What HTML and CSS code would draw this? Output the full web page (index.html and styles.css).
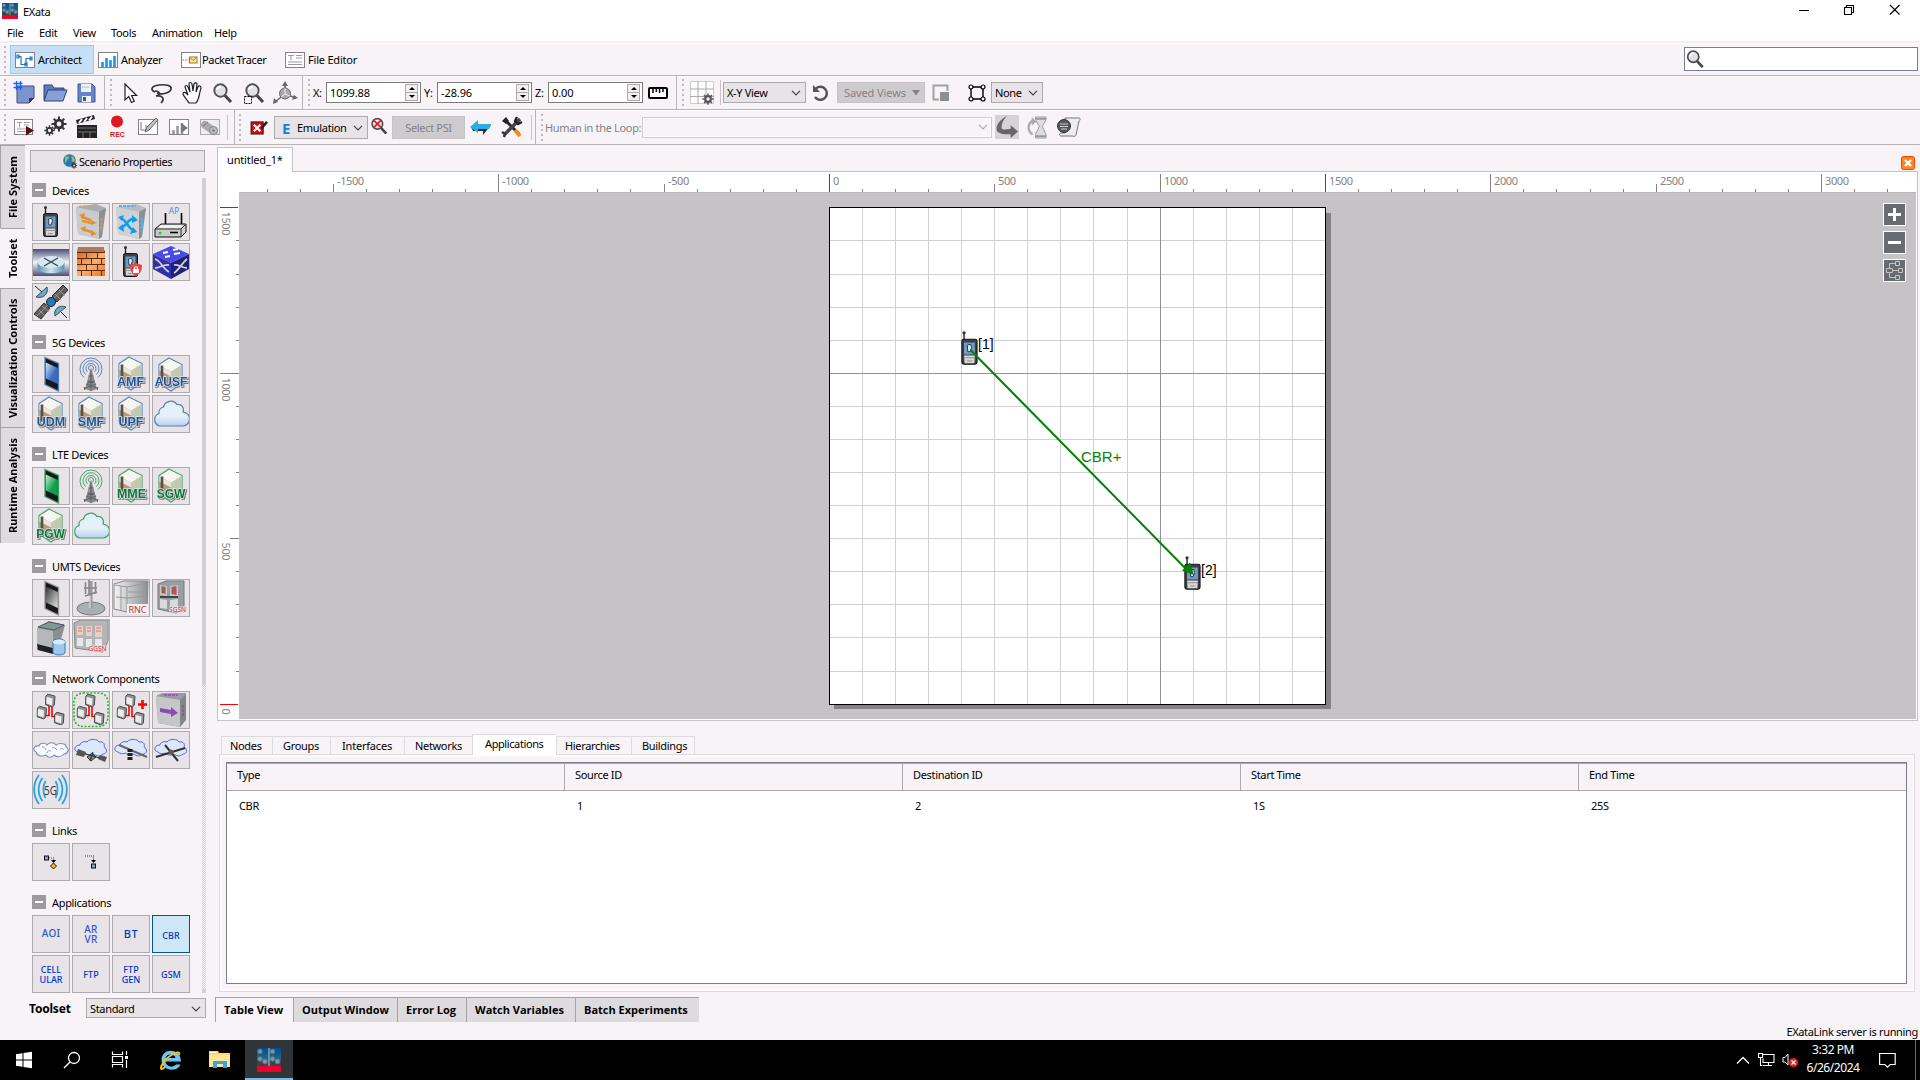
FILE: index.html
```html
<!DOCTYPE html>
<html lang="en">
<head>
<meta charset="utf-8">
<title>EXata</title>
<link rel="stylesheet" href="styles.css">
</head>
<body>
<svg class="defs" aria-hidden="true">
  <defs>
    <linearGradient id="gBlue" x1="0" y1="0" x2="1" y2="1"><stop offset="0" stop-color="#dce8f8"/><stop offset=".6" stop-color="#3a6cc0"/></linearGradient>
    <linearGradient id="gGreen" x1="0" y1="0" x2="1" y2="1"><stop offset="0" stop-color="#cdeed8"/><stop offset=".6" stop-color="#12a04c"/></linearGradient>
    <linearGradient id="gGray" x1="0" y1="0" x2="1" y2="1"><stop offset="0" stop-color="#333"/><stop offset="1" stop-color="#e4e4e4"/></linearGradient>
    <linearGradient id="gRouter" x1="0" y1="0" x2="0" y2="1"><stop offset="0" stop-color="#4a4f78"/><stop offset=".5" stop-color="#f4f4f8"/><stop offset="1" stop-color="#4a4f78"/></linearGradient>
    <linearGradient id="gDisc" x1="0" y1="0" x2="1" y2="0"><stop offset="0" stop-color="#5f93ae"/><stop offset=".5" stop-color="#cfe4ee"/><stop offset="1" stop-color="#5f93ae"/></linearGradient>
    <linearGradient id="gCloud" x1="0" y1="0" x2="0" y2="1"><stop offset=".6" stop-color="#e6f0f8"/><stop offset="1" stop-color="#b8d0f0"/></linearGradient>
    <linearGradient id="gMetal" x1="0" y1="0" x2="1" y2="0"><stop offset="0" stop-color="#f4f4f4"/><stop offset="1" stop-color="#8c9094"/></linearGradient>
    <linearGradient id="gSea" x1="0" y1="0" x2="0" y2="1"><stop offset="0" stop-color="#00508e"/><stop offset="1" stop-color="#29668a"/></linearGradient>
    <linearGradient id="gBrick" x1="0" y1="0" x2="1" y2="1"><stop offset="0" stop-color="#d86820"/><stop offset=".5" stop-color="#ffb070"/><stop offset="1" stop-color="#e87820"/></linearGradient>
    <symbol id="exata" viewBox="0 0 24 24">
      <rect width="24" height="12" fill="url(#gSea)"/><rect y="12" width="24" height="6" fill="#39434b"/><rect y="18" width="24" height="6" fill="#f0002d"/>
      <path d="M12 0v18" stroke="#7ea0b4" stroke-width="1.6"/>
      <g fill="#7d98a8" stroke="#5b7a8c"><circle cx="3" cy="3.5" r="2.2"/><circle cx="15.500" cy="3.500" r="2.200"/><circle cx="3" cy="11" r="2.200"/><circle cx="8" cy="13.500" r="2.400"/><circle cx="15.500" cy="11" r="2.200"/><circle cx="20.500" cy="13.500" r="2.400"/></g>
    </symbol>
    <symbol id="handset" viewBox="0 0 36 36">
      <path d="M12.500 3v9" stroke="#222" stroke-width="1.300"/><circle cx="12.500" cy="3.500" r="1.500" fill="#333"/>
      <rect x="10.500" y="9.500" width="14" height="23" rx="1.800" fill="#3b4045" stroke="#15171a"/>
      <rect x="12.500" y="12.500" width="10" height="11" fill="#6f9cc8"/><path d="M15.500 15l3-1 1 3-1.500 4-2 0z" fill="#e8f0f6" stroke="#20303c" stroke-width=".9"/>
      <path d="M12.500 24.500h10l-.5 7h-9z" fill="#d8d8d8"/><path d="M12.500 26.500h10M15 29.500h5" stroke="#888" stroke-width=".8"/>
    </symbol>
    <symbol id="smart" viewBox="0 0 36 36">
      <path d="M12 1.500l13.500 6v27.500l-13.500-6.500z" fill="#16181c" stroke="var(--line)" stroke-width="1.300"/>
      <path d="M12.800 6.500l12 5.500v16l-12-5.500z"/>
    </symbol>
    <symbol id="tower" viewBox="0 0 36 36">
      <g fill="none" stroke="var(--line)" stroke-width=".95"><circle cx="18" cy="12" r="2.500"/><path d="M14.500 16a5 5 0 1 1 7 0M12.500 18.500a8 8 0 1 1 11 0M11 21.500a11 11 0 1 1 14 0"/></g>
      <path d="M18 11.500l6 21.500-6 2-6-2z" fill="#8a8d90"/><path d="M18 15v20M15.500 20h5M14.500 25l7 2M21.500 25l-7 2M12 32l11-4M24 32l-11-4" stroke="#55585b" stroke-width=".8"/><path d="M11 31l1 3M25 31l-1 3" stroke="#555"/>
    </symbol>
    <symbol id="server" viewBox="0 0 36 36">
      <path d="M16 1l13 6.500v19l-11 7.500-12-8v-18.500z" fill="#f7f6f0" stroke="var(--line)" stroke-width="1.100"/>
      <path d="M6.500 8.500l11.500 6v17l-11.500-7z" fill="#b59a76"/><path d="M6.500 8.500l11.500 6v5l-11.500-6z" fill="#e8e4de"/>
      <path d="M18 14.500l10.500-6.500v18l-10.500 6.500z" fill="#c3c9b1"/><path d="M9 8.500v17" stroke="#57504a" stroke-width="2.600"/>
    </symbol>
    <symbol id="cloud" viewBox="0 0 36 36">
      <path d="M7 30a6.500 6.500 0 0 1-1-12.500 6 6 0 0 1 4.500-6.500 7.500 7.500 0 0 1 13.500-2.500 5.500 5.500 0 0 1 6 7.500 7 7 0 0 1-1 14z" fill="url(#gCloud)" stroke="var(--line)" stroke-width="1.200"/>
    </symbol>
    <symbol id="mini" viewBox="0 0 11 14"><path d="M3 .7l7 2-.7 9-2 1.800-6.800-2.300.3-8.500z" fill="#909294" stroke="#3a3c3e" stroke-width=".9"/><path d="M1.500 3.300l6 1.600-.4 7-5.800-1.900z" fill="#ececec"/></symbol>
    <symbol id="trio" viewBox="0 0 36 36">
      <path d="M16 14v9.500h-4M19 14v10.500h4" fill="none" stroke="#f00" stroke-width="1.600"/>
      <use href="#mini" x="12" y="1.500" width="11" height="14"/><use href="#mini" x="3.500" y="13.500" width="11" height="14"/><use href="#mini" x="21" y="19.500" width="11" height="14"/>
    </symbol>
    <symbol id="airCloud" viewBox="0 0 36 36"><path d="M5 20c-5-1-4-7 2-7 0-3 5-4 7-3 3-4 11-3 12 0 5-1 6 3 5 5 4 2 3 7-1 7-3 3-7 2-9 0-4 2-7 1-8-1-3 1-6 1-8-1z" fill="#dce8fa" stroke="#5a66dc" stroke-width="1"/></symbol>
    <symbol id="lens" viewBox="0 0 20 20"><path d="M11.500 12l6.500 7" stroke="#444" stroke-width="3"/><circle cx="7.500" cy="7.500" r="6.200" fill="#e2e2e4" stroke="#4d4f52" stroke-width="1.900"/><path d="M4 7a4 4 0 0 1 4-3.500" stroke="#fff" stroke-width="1.800" fill="none"/></symbol>
    <symbol id="page" viewBox="0 0 20 16" preserveAspectRatio="none"><rect x=".5" y=".5" width="19" height="15" fill="#fff" stroke="#848284"/></symbol>
    <symbol id="gear" viewBox="0 0 16 16"><circle cx="8" cy="8" r="3.800" fill="none" stroke="currentColor" stroke-width="2.800"/><path d="M8 .5v3M8 12.500v3M.5 8h3M12.500 8h3M2.700 2.700l2.200 2.200M11.100 11.100l2.200 2.200M13.300 2.700l-2.200 2.200M4.900 11.100l-2.200 2.200" stroke="currentColor" stroke-width="2"/></symbol>
    <symbol id="chev" viewBox="0 0 10 6"><path d="M1 .8l4 4 4-4" fill="none" stroke="currentColor" stroke-width="1.200"/></symbol>
  </defs>
</svg>

<header class="titlebar">
  <svg class="logo"><use href="#exata"/></svg><span>EXata</span>
  <svg class="winctl" viewBox="0 0 102 12"><path d="M0 6.500h10M45.500 3.500h7v7h-7zM47.500 3.500v-2h7v7h-2M91 1l9.500 9.500M100.500 1l-9.500 9.500" fill="none" stroke="#000" stroke-width="1.100"/></svg>
</header>
<nav class="menu"><span class="m1">File</span><span class="m2">Edit</span><span class="m3">View</span><span class="m4">Tools</span><span class="m5">Animation</span><span>Help</span></nav>

<div class="bar modes">
  <i class="grip"></i>
  <span class="mode on"><svg class="pg"><use href="#page"/><path d="M3 4.500h3v8h5v-6h6M2 3h2v3h-2zM10 11h2v3h-2zM15 5h2v3h-2z" fill="none" stroke="#2277b8" stroke-width="1.200"/></svg>Architect</span>
  <span class="mode an"><svg class="pg"><use href="#page"/><path d="M4.500 15v-5M8.500 15v-9M12.500 15v-7M16.500 15v-11" stroke="#1c97dc" stroke-width="2.600"/></svg>Analyzer</span>
  <span class="mode pt"><svg class="pg"><use href="#page"/><path d="M1.500 8h6" stroke="#e85a30" stroke-dasharray="1.500 1"/><rect x="8.500" y="5" width="7.500" height="6" fill="#fbe8a0" stroke="#9a7a20"/><path d="M9 5.500l3 3 3.500-3" fill="none" stroke="#9a7a20"/></svg>Packet Tracer</span>
  <span class="mode fe"><svg class="pg"><use href="#page"/><path d="M3 3.500h6M6 3.500v5M11 3.500h6M11 6h6M3 10h14M3 12.500h14" stroke="#9a98a0"/></svg>File Editor</span>
  <div class="search"><svg><use href="#lens"/></svg></div>
</div>

<div class="bar tools">
  <section class="g1"><i class="grip"></i>
    <svg class="ic" viewBox="0 0 31 26"><path d="M9 6h17v12l-5 5h-12z" fill="#7c93d0" stroke="#3c4c80"/><path d="M26 18h-5v5z" fill="#2c3a60"/><path d="M8.500 1v9M12.500 1v9M5.500 3.500h9M5.500 7.500h9" stroke="#1d5fe8" stroke-width="1.300"/></svg>
    <svg class="ic" viewBox="0 0 31 26"><path d="M5 20v-15h8l2 3h10v4" fill="#5d78bd" stroke="#2f4478"/><path d="M5 21l4-11h19l-4 11z" fill="#87a0d8" stroke="#2f4478"/></svg>
    <svg class="ic" viewBox="0 0 31 26"><path d="M8 4h14l3 3v15h-17z" fill="#6684cc" stroke="#43578c"/><path d="M11 4h10v8h-10zM12 16h9v6h-9z" fill="#eef2f8"/><path d="M13 17h3v4h-3z" fill="#43578c"/><path d="M12 7h8" stroke="#a8c0e0"/></svg>
  </section>
  <section class="g2"><i class="grip"></i>
    <svg class="ic" viewBox="0 0 31 26"><path d="M10 4v16l3.800-3.500 2.700 6 2.800-1.300-2.700-5.700h5z" fill="#fff" stroke="#222" stroke-width="1.200"/></svg>
    <svg class="ic" viewBox="0 0 31 26"><path d="M9 12c-5-2-4-6 4-7 8-1 13 1 12 4-1 4-9 6-14 4M9 11c5 0 6 4 1 5 7-1 9 3 5 7" fill="none" stroke="#333" stroke-width="1.700"/></svg>
    <svg class="ic" viewBox="0 0 31 26"><path d="M12 23c-2-4-5-6-6-9 0-2 2-2 3-1l2 2-3-8c0-2 2-2 3 0l2 5-1-8c0-2 2-2 3 0l1 7 1-7c1-2 3-1 3 0l-1 8 2-5c1-2 3-1 3 1-2 5-1 10-5 15z" fill="#fff" stroke="#222" stroke-width="1.200"/></svg>
    <svg class="ic" viewBox="0 0 31 26"><use href="#lens" x="5" y="3" width="20" height="20"/></svg>
    <svg class="ic" viewBox="0 0 31 26"><use href="#lens" x="6" y="3" width="20" height="20"/><path d="M5.500 16.500h7v7h-7z" fill="none" stroke="#000" stroke-dasharray="2 1"/></svg>
    <svg class="ic" viewBox="0 0 31 26"><path d="M15 14v-11M15 14l11 4M15 14l-10 8" stroke="#666" stroke-width="1.600"/><path d="M15 1l3 5h-6zM28 18l-6 2 2-5zM3 24l1-6 4 4z" fill="#666"/><circle cx="15" cy="13.500" r="5.500" fill="#aaa" stroke="#666"/><path d="M15 8v6l5 2M15 14l-4 3" fill="none" stroke="#eee"/></svg>
  </section>
  <section class="g3"><i class="grip"></i>
    <label>X:</label><span class="spin">1099.88<i></i></span><label>Y:</label><span class="spin">-28.96<i></i></span><label>Z:</label><span class="spin">0.00<i></i></span>
    <svg class="rule" viewBox="0 0 20 12"><rect x="1" y="1" width="18" height="10" rx="1" fill="#fff" stroke="#000" stroke-width="2"/><path d="M5 1v5M8.300 1v4M11.600 1v5M15 1v4" stroke="#000" stroke-width="1.500"/></svg>
  </section>
  <section class="g4"><i class="grip"></i>
    <svg class="gridic" viewBox="0 0 24 24"><path d="M.5.5h23v22h-23z" fill="#fff" stroke="#ccc"/><path d="M8 0v23M16 0v23M0 8h24M0 15.500h24" stroke="#aaa"/><g color="#555"><use href="#gear" x="12" y="12" width="12" height="12"/></g></svg>
    <i class="vsep"></i>
    <span class="sel xy">X-Y View<svg><use href="#chev"/></svg></span>
    <svg class="rot" viewBox="0 0 18 18"><path d="M4 4.500a6.500 6.500 0 1 1-1 8.500" fill="none" stroke="#555" stroke-width="2.500"/><path d="M1 1v7h7z" fill="#555"/></svg>
    <span class="btn sv">Saved Views<svg viewBox="0 0 8 6"><path d="M0 0h8l-4 5.500z" fill="#848284"/></svg></span>
    <svg class="sq" viewBox="0 0 17 17"><path d="M7 15.500h-5.500v-14h14v5.500" fill="none" stroke="#a0a4a0" stroke-width="2"/><path d="M8 8h9v9h-9z" fill="#8c908c"/></svg>
    <svg class="bb" viewBox="0 0 18 18"><path d="M3 3h12v12h-12z" fill="none" stroke="#000" stroke-width="1.400"/><g fill="#fff" stroke="#000" stroke-width="1.200"><circle cx="3" cy="3" r="2"/><circle cx="15" cy="3" r="2"/><circle cx="3" cy="15" r="2"/><circle cx="15" cy="15" r="2"/></g></svg>
    <span class="sel none">None<svg><use href="#chev"/></svg></span>
  </section>
</div>

<div class="bar run">
  <section class="r1"><i class="grip"></i>
    <svg class="ic" viewBox="0 0 31 26"><use href="#page" x="5" y="5" width="19" height="16"/><path d="M8 8.500h5M10.500 8.500v5M15 8.500h6M15 11h5M8 15h9M8 17.500h9" stroke="#a09ca0"/><path d="M17 12l8 4.500-8 5z" fill="#5a0c0c"/></svg>
    <svg class="ic" viewBox="0 0 31 26"><g color="#333"><use href="#gear" x="11" y="2" width="16" height="16"/><use href="#gear" x="4" y="11" width="11" height="11"/></g></svg>
    <svg class="ic" viewBox="0 0 31 26"><path d="M6 11h20v13h-20zM5 6l18-5 1 4-18 5z" fill="#222"/><path d="M8 9l3-4M13 8l3-4M18 6.500l3-4" stroke="#fff" stroke-width="2"/><path d="M7 14h18M7 18h18M12 18v6M19 18v6" stroke="#777"/></svg>
    <svg class="ic" viewBox="0 0 31 26"><circle cx="15" cy="7.500" r="6" fill="#e01820"/><text x="15.500" y="23" class="rec">REC</text></svg>
    <svg class="ic" viewBox="0 0 31 26"><use href="#page" x="5" y="5" width="20" height="16"/><path d="M8 8v8h5v-5" fill="none" stroke="#777"/><path d="M12 18l2-5 9-9 2 2-9 10z" fill="#c0c0c0" stroke="#666"/></svg>
    <svg class="ic" viewBox="0 0 31 26"><use href="#page" x="5" y="5" width="20" height="16"/><path d="M9.500 20v-4M13.500 20v-8M18 20v-11" stroke="#999" stroke-width="2.600"/><path d="M17 9l7 5-7 5z" fill="#777"/></svg>
    <svg class="ic" viewBox="0 0 31 26"><rect x="5.500" y="5.500" width="19" height="15" fill="#eee" stroke="#aaa"/><path d="M10 11l9 6" stroke="#aaa" stroke-width="8" stroke-linecap="round"/><circle cx="18.500" cy="16.500" r="4" fill="#bbb" stroke="#888"/><circle cx="18.500" cy="16.500" r="1.500" fill="#888"/><path d="M8 12l5-4" stroke="#777"/></svg>
    <i class="vsep"></i>
  </section>
  <section class="r2"><i class="grip"></i>
    <svg class="rx" viewBox="0 0 19 16"><rect x="1" y="2" width="13" height="13" fill="#e8000c" stroke="#222"/><path d="M4 5l7 7M11 5l-7 7" stroke="#fff" stroke-width="2.400"/><path d="M12 9l6-7" stroke="#222" stroke-width="2.600"/></svg>
    <span class="sel emu"><b>E</b>Emulation<svg><use href="#chev"/></svg></span>
    <svg class="rs" viewBox="0 0 20 20"><use href="#lens"/><path d="M3 3l9 9M12 3l-9 9" stroke="#d8202a" stroke-width="2"/></svg>
    <span class="btn psi">Select PSI</span>
    <svg class="arr" viewBox="0 0 22 16"><path d="M21 6l-8 10v-4h-10l-2-4z" fill="#20303c"/><path d="M8 1v4h13l-2 5h-11v4l-8-6z" fill="#29aee4"/></svg>
    <svg class="wr" viewBox="0 0 22 22"><path d="M4 4l14 14" stroke="#222" stroke-width="3"/><path d="M1 5l4-4 3 4-3 3z" fill="#222"/><path d="M19 3l-15 15" stroke="#444" stroke-width="3.400"/><path d="M14 14l5 6" stroke="#f09018" stroke-width="4"/><path d="M16 1l-2 4 3 3 4-2" fill="none" stroke="#222" stroke-width="2.400"/><path d="M1 16l3 2-1 3" fill="none" stroke="#333" stroke-width="2.500"/></svg>
    <i class="vsep"></i>
  </section>
  <section class="r3"><i class="grip"></i>
    <span class="hil">Human in the Loop:</span><span class="combo"><svg><use href="#chev"/></svg></span>
    <svg class="go" viewBox="0 0 24 24"><path d="M12 0c-8 4-13 11-11 16 2 4 10 4 15 4v4l8-7-8-7v4c-6 1-9 1-10-1 0-5 2-9 6-13z" fill="#666"/></svg>
    <svg class="hg" viewBox="0 0 22 24"><path d="M10 1h11v3l-4 7 4 8v4h-11v-4l4-8-4-7z" fill="#ddd" stroke="#999"/><path d="M10 3h11M10 21h11" stroke="#999" stroke-width="2"/><path d="M6 20c-6-4-6-12 0-16v-3l5 5-5 4v-3c-3 3-3 8 2 12z" fill="#aaa"/></svg>
    <svg class="sc" viewBox="0 0 24 20"><path d="M8 1h14c2 0 1 3 0 3l-3 14c0 1-2 2-3 1h-12c-2 0-2-3 0-3h4z" fill="#eee" stroke="#777"/><circle cx="7" cy="9" r="6.500" fill="#55575a" stroke="#333"/><path d="M3 7h8M3 9.500h8M4 12h6" stroke="#ccc"/></svg>
  </section>
</div>

<main class="body">
  <aside class="vtabs"><div class="v1">File System</div><div class="v2 on">Toolset</div><div class="v3">Visualization Controls</div><div class="v4">Runtime Analysis</div></aside>

  <aside class="toolset">
    <div class="scen"><svg viewBox="0 0 15 15"><circle cx="6.500" cy="6.500" r="6.300" fill="#2a78b0"/><path d="M2 3c4-2 5 0 3 2s-1 3-3 4zM8 2c3 0 4 3 4 5-2 2-4 0-3-2z" fill="#8cc070"/><g color="#333"><use href="#gear" x="7.500" y="8" width="7" height="7"/></g></svg>Scenario Properties</div>
    <div class="scroller">
      <div class="groups">
        <h3>Devices</h3>
        <div class="cells">
          <svg><use href="#handset"/></svg>
          <svg viewBox="0 0 36 36"><path d="M3 3l20-3 10 4-7 31-21-5z" fill="#a9adb1"/><path d="M3 3l23 5v27l-21-5z" fill="#c9ccce"/><path d="M26 8l7-4-4 29-3 2z" fill="#8c9094"/><path d="M8 13l9 3M18 19l-9-2M9 25l10 3" stroke="#e8902a" stroke-width="2"/><path d="M6 11l6-2-1 6zM24 19l-6-3v5zM7 24l6-2-1 6zM24 30l-6-4v6z" fill="#e8902a"/><path d="M9 17l12 2M9 25l12 4M10 13l8 3" stroke="#e8902a" stroke-width="2.200"/><path d="M6 2.500l17-1" stroke="#d8a060" stroke-width="1.500" stroke-dasharray="3 1"/><path d="M29 14l-1 13" stroke="#d8a060" stroke-width="1.500" stroke-dasharray="3 1"/></svg>
          <svg viewBox="0 0 36 36"><path d="M3 3l20-3 10 4-7 31-21-5z" fill="#b9bdc1"/><path d="M3 3l23 5v27l-21-5z" fill="#cfd2d4"/><path d="M26 8l7-4-4 29-3 2z" fill="#8c9094"/><path d="M7 14c6 0 8 12 15 13M7 24c6 0 8-11 15-9" fill="none" stroke="#0c9cf4" stroke-width="2.500"/><path d="M19 11l6 5-6 3zM20 23l4 5-7 2zM11 11l-6 2 4 4zM10 20l-5 4 6 4z" fill="#0c9cf4"/><path d="M6 2l17 0M29 14v14" stroke="#5ab4ec" stroke-width="2" stroke-dasharray="3 1"/></svg>
          <svg viewBox="0 0 36 36"><text x="21" y="9.500" class="ap">AP</text><path d="M12.500 9v14M28.500 9v14" stroke="#000" stroke-width="1.600"/><path d="M2 25l6-5h25v8l-5 5h-26z" fill="#ccc" stroke="#111"/><path d="M2 25h26l5-5M28 25v8" fill="none" stroke="#333"/><path d="M8 21h22l-3 3h-22z" fill="#f0f0f0"/><circle cx="7" cy="29" r="1.500" fill="#1ed040"/><path d="M17 28.500h8" stroke="#000" stroke-width="1.600"/></svg>
          <svg viewBox="0 0 36 36"><rect y="5" width="36" height="27" fill="url(#gRouter)"/><path d="M4.500 18v6c0 7 27 7 27 0v-6z" fill="url(#gDisc)"/><ellipse cx="18" cy="18" rx="13.500" ry="6" fill="#d4e8f2"/><path d="M11 14l14 8M25 14l-14 8" fill="none" stroke="#333c44" stroke-width="1.100"/></svg>
          <svg viewBox="0 0 36 36"><path d="M4 8l3-5h23l2 5v24h-28z" fill="#5a2c14"/><path d="M5 3h26v5h-27z" fill="#b07858"/><path fill="url(#gBrick)" d="M4 9h9v5h-9zM14 9h10v5h-10zM25 9h7v5h-7zM4 15h4v5h-4zM9 15h9v5h-9zM19 15h9v5h-9zM29 15h3v5h-3zM4 21h9v5h-9zM14 21h10v5h-10zM25 21h7v5h-7zM4 27h4v5h-4zM9 27h9v5h-9zM19 27h9v5h-9zM29 27h3v5h-3z"/></svg>
          <svg viewBox="0 0 36 36"><use href="#handset" width="36" height="36"/><path d="M17 21l6-2 6 2c0 6-2 9-6 11-4-2-6-5-6-11z" fill="#ee4444"/><path d="M20 25h6v4h-6z" fill="#fff"/><path d="M21.500 25v-2h3v2" fill="none" stroke="#fff"/></svg>
          <svg viewBox="0 0 36 36"><path d="M18 2l18 8-18 9-18-9z" fill="#4a4ae8"/><path d="M0 10l18 9v16l-18-10z" fill="#3030a8"/><path d="M36 10l-18 9v16l18-10z" fill="#20207c"/><path d="M2 15c6 2 8 10 14 13M2 24c5 0 8-4 14-3M21 29c5-3 7-9 13-14M21 21c4-1 8 3 13 3" fill="none" stroke="#d0d0d8" stroke-width="1.800"/><path d="M10 9l5-1M20 6l5-1M12 13l5-1M21 10l6-1" stroke="#fff" stroke-width="2"/></svg>
          <svg viewBox="0 0 36 36"><path d="M1 30l10-11 6 5-9 11zM19 12l11-11 5 5-11 12z" fill="#5c5c5c" stroke="#333"/><path d="M4 32l27-28M9 22l7 6M6 26l6 6M22 10l6 6M26 6l6 6" stroke="#aaa" stroke-width=".8"/><circle cx="18" cy="18" r="4.500" fill="#2a78b0" stroke="#124"/><path d="M14 3c2 7-4 12-11 10zM33 23c-7-3-13 3-11 9z" fill="#70a8c4" stroke="#245" stroke-width=".9"/><path d="M9 8l-7-6M28 28l6 6" stroke="#222"/></svg>
        </div>
        <h3>5G Devices</h3>
        <div class="cells blue">
          <svg><g fill="url(#gBlue)"><use href="#smart"/></g></svg><svg><use href="#tower"/></svg>
          <svg viewBox="0 0 36 36"><use href="#server"/><text x="17.500" y="30">AMF</text></svg>
          <svg viewBox="0 0 36 36"><use href="#server" y="1"/><text x="18" y="30" class="n">AUSF</text></svg>
          <svg viewBox="0 0 36 36"><use href="#server"/><text x="18" y="30">UDM</text></svg>
          <svg viewBox="0 0 36 36"><use href="#server"/><text x="18" y="30">SMF</text></svg>
          <svg viewBox="0 0 36 36"><use href="#server"/><text x="18" y="30">UPF</text></svg>
          <svg><use href="#cloud"/></svg>
        </div>
        <h3>LTE Devices</h3>
        <div class="cells green">
          <svg><g fill="url(#gGreen)"><use href="#smart"/></g></svg><svg><use href="#tower"/></svg>
          <svg viewBox="0 0 36 36"><use href="#server"/><text x="18.500" y="30">MME</text></svg>
          <svg viewBox="0 0 36 36"><use href="#server"/><text x="18" y="30" class="n">SGW</text></svg>
          <svg viewBox="0 0 36 36"><use href="#server"/><text x="17.500" y="30" class="n">PGW</text></svg>
          <svg><use href="#cloud"/></svg>
        </div>
        <h3>UMTS Devices</h3>
        <div class="cells gray">
          <svg><g fill="url(#gGray)"><use href="#smart"/></g></svg>
          <svg viewBox="0 0 36 36"><ellipse cx="18" cy="28.500" rx="14" ry="6.500" fill="#a8b0b4" stroke="#777"/><path d="M18 1v27" stroke="#999" stroke-width="3"/><path d="M12.500 2v12M16 0v14M22.500 2v12M11 8h13M12 16l12-4" stroke="#888" stroke-width="1.600"/><path d="M17 16v12" stroke="#eee"/></svg>
          <svg viewBox="0 0 36 36"><path d="M1 4l10-3h24l-1 30-20 1-13-3z" fill="url(#gMetal)" stroke="#888"/><path d="M2 5l12 2 20-4M14 7v24M3 17l11 1 19-2M15 12h18M8 6v24" fill="none" stroke="#999"/><rect x="14" y="24" width="21" height="10" fill="#f6f0f0"/><text x="24.500" y="33" class="red">RNC</text></svg>
          <svg viewBox="0 0 36 36"><path d="M5 4l8-3h18v28l-8 4-18-4z" fill="#9a9ea2" stroke="#777"/><path d="M7 5l7 1v10l-7-1zM17 6l8-1v12l-8-1z" fill="#c4c6c8"/><path d="M8.500 6l4 1v7l-4-1zM18.500 7l5-1v9l-5-1z" fill="#a85a54"/><path d="M7 19l7 1v9l-7-1zM17 20l8-1v11l-8 0z" fill="#d6dadc"/><path d="M7 17h18" stroke="#444" stroke-width="2"/><rect x="16" y="26.500" width="17" height="6" fill="#eadede"/><text x="24.500" y="32" class="red s">SGSN</text></svg>
          <svg viewBox="0 0 36 36"><path d="M4 8l12-7 16 4-8 29-20-4z" fill="#8a9092"/><path d="M4 8l16 3v21l-16-4z" fill="#b4b8ba"/><path d="M5 7l11-5 15 3-10 5z" fill="#7f9a94" stroke="#556"/><path d="M4 24l16 4v6l-15-4z" fill="#222"/><path d="M20 22c0-4 12-4 12 0v10c0 4-12 4-12 0z" fill="#9cc8f0" stroke="#47a"/><ellipse cx="26" cy="22" rx="6" ry="2.500" fill="#d8ecfa"/></svg>
          <svg viewBox="0 0 36 36"><path d="M1 3l7-3h27v21l-5 11-28-4z" fill="#b2b6b8" stroke="#888"/><path d="M4 6h6v9h-6zM13 6h6v10h-6zM22 6h7v11h-7z" fill="#ecd0c4"/><path d="M4 18h6v8h-6zM13 19h6v8h-6zM22 19h7v7h-7z" fill="#e6e9ea"/><path d="M5 8h4M5 11h4M14 8h4M14 11h4M23 8h5M23 11h5" stroke="#cc7c68"/><rect x="16" y="25.500" width="18" height="6" fill="#eadede"/><text x="24.500" y="31" class="red s">GGSN</text></svg>
        </div>
        <h3>Network Components</h3>
        <div class="cells">
          <svg><use href="#trio"/></svg>
          <svg viewBox="0 0 36 36"><use href="#trio"/><rect x="1" y="1" width="34" height="33.500" rx="9" fill="none" stroke="#19c019" stroke-width="1.600" stroke-dasharray="2 1.600"/></svg>
          <svg viewBox="0 0 36 36"><use href="#trio"/><path d="M29.500 8v9M25 12.500h9" stroke="#f00" stroke-width="2.600"/></svg>
          <svg viewBox="0 0 36 36"><path d="M3 4l6-3h24v26l-6 8-22-4z" fill="#999ca0"/><path d="M3 4l24 4v27l-22-4z" fill="#c4c6c8"/><path d="M27 8l6-6v26l-6 7z" fill="#83878b"/><path d="M7 16l11 2v-3l7 6-7 4v-3l-11-2z" fill="#9048b8"/><path d="M11 3h14M30 13v12" stroke="#9048b8" stroke-width="1.500" stroke-dasharray="3 1"/></svg>
          <svg viewBox="0 0 36 36"><path d="M3 20c-4-2-2-7 3-6 1-4 7-3 8-1 2-3 7-3 9 0 4-3 11-1 10 2 4 2 2 7-2 7-3 4-8 3-10 1-3 4-7 2-8 0-4 2-9 1-10-3z" fill="#f7fafd" stroke="#7690b8" stroke-width="1.100"/><path d="M9 15c2 0 4 1 4 3M19 16c2-1 4 0 5 2M27 17c2-1 4 0 4 1M14 21c0-2 2-3 4-2" fill="none" stroke="#8ca4c8"/></svg>
          <svg viewBox="0 0 36 36"><use href="#airCloud"/><path d="M5 17l8 3-2 5-8-2zM27 23l7 2-2 5-7-3z" fill="#555"/><path d="M14 25l5-4 4 4-5 4z" fill="#888" stroke="#333"/><path d="M20 20l-3 9M12 22l15 4" stroke="#333" stroke-width="1.200"/></svg>
          <svg viewBox="0 0 36 36"><use href="#airCloud"/><path d="M6 13l28 12" stroke="#666" stroke-width="2"/><path d="M17 17v12" stroke="#222" stroke-width="5" stroke-dasharray="3 1"/></svg>
          <svg viewBox="0 0 36 36"><use href="#airCloud"/><path d="M3 25l29-9M12 13l13 16" stroke="#333" stroke-width="2"/><circle cx="18" cy="20" r="2.500" fill="#6b5a30"/></svg>
          <svg viewBox="0 0 36 36"><g fill="none" stroke="#28a4e4" stroke-width="1.800"><path d="M6 3a24 24 0 0 0 0 29M9.500 6a19 19 0 0 0 0 23M29 3a24 24 0 0 1 0 29M25.500 6a19 19 0 0 1 0 23M12.500 9a14 14 0 0 0-2 9 14 14 0 0 0 2 8M22.500 9a14 14 0 0 1 2 9 14 14 0 0 1-2 8"/></g><text x="17.500" y="22.500" class="fiveg" textLength="13" lengthAdjust="spacingAndGlyphs">5G</text></svg>
        </div>
        <h3>Links</h3>
        <div class="cells">
          <svg viewBox="0 0 36 36"><path d="M16 14h4.500v3" fill="none" stroke="#a03040" stroke-width="1.200" stroke-dasharray="1 1"/><rect x="11.500" y="12" width="4" height="4" fill="#8fa0e0" stroke="#111"/><path d="M18 16h5l-2.500 3z"/><path d="M20.500 19l3 3-3 3-3-3z" fill="#f8b020" stroke="#222"/></svg>
          <svg viewBox="0 0 36 36"><path d="M12 12h8.500v5" fill="none" stroke="#a01020" stroke-width="1.200" stroke-dasharray="1 1"/><path d="M18 16h5l-2.500 3z"/><rect x="18.500" y="20" width="4" height="4" fill="#8fa0e0" stroke="#111"/></svg>
        </div>
        <h3>Applications</h3>
        <div class="cells apps"><span class="thin up">AOI</span><span class="thin">AR<br>VR</span><span class="big">BT</span><span class="on">CBR</span><span>CELL<br>ULAR</span><span>FTP</span><span>FTP<br>GEN</span><span>GSM</span></div>
      </div>
      <div class="sbar"><i></i><b></b></div>
    </div>
    <div class="pick"><b>Toolset</b><span class="sel std">Standard<svg><use href="#chev"/></svg></span></div>
  </aside>

  <div class="work">
    <div class="doctabs"><span>untitled_1*</span><svg viewBox="0 0 14 14"><rect x=".5" y=".5" width="13" height="13" rx="2" fill="#ff8428" stroke="#f04800"/><path d="M4 4l6 6M10 4l-6 6" stroke="#fff" stroke-width="2.400"/></svg></div>
    <div class="frame">
      <svg class="rtop" id="rtop"></svg>
      <svg class="rleft" id="rleft"></svg>
      <div class="view">
        <svg class="scene" id="scene">
          <rect x="595" y="21" width="497" height="496" fill="#848284"/>
          <rect x="590.500" y="15.500" width="496" height="497" fill="#fff" stroke="#000"/>
          <g id="grid"></g>
          <use href="#handset" x="711" y="137" width="40" height="39"/>
          <use href="#handset" x="934" y="362" width="40" height="39"/>
          <path d="M731.500 158L950 380" stroke="#068006" stroke-width="2"/>
          <path d="M955 383l-12-4.500 8-8z" fill="#068006"/>
          <text x="739" y="157" class="id">[1]</text><text x="962" y="383" class="id">[2]</text>
          <text x="842" y="269.500" class="cbr">CBR+</text>
        </svg>
        <div class="zoomers">
          <svg viewBox="0 0 23 23"><path d="M11.500 5v13M5 11.500h13" stroke="#fff" stroke-width="3"/></svg>
          <svg viewBox="0 0 23 23"><path d="M5 11.500h13" stroke="#fff" stroke-width="3"/></svg>
          <svg viewBox="0 0 23 23"><path d="M12.500 2.500h4v4h-4zM3.500 9.500h6v4h-6zM15.500 9.500h4v4h-4zM12.500 16.500h4v4h-4zM6.500 9.500v-5h6M6.500 13.500v5h6M9.500 11.500h6" fill="none" stroke="#c6c3c6"/></svg>
        </div>
      </div>
    </div>
    <div class="tabs"><span class="t1">Nodes</span><span class="t2">Groups</span><span class="t3">Interfaces</span><span class="t4">Networks</span><span class="t5 on">Applications</span><span class="t6">Hierarchies</span><span class="t7">Buildings</span></div>
    <div class="pane">
      <div class="table">
        <div class="tr th"><span>Type</span><span>Source ID</span><span>Destination ID</span><span>Start Time</span><span>End Time</span></div>
        <div class="tr"><span>CBR</span><span>1</span><span>2</span><span>1S</span><span>25S</span></div>
      </div>
    </div>
    <div class="btabs"><span class="b1 on">Table View</span><span class="b2">Output Window</span><span class="b3">Error Log</span><span class="b4">Watch Variables</span><span class="b5">Batch Experiments</span></div>
    <div class="status">EXataLink server is running</div>
  </div>
</main>

<footer class="taskbar">
  <svg class="tb" viewBox="0 0 48 40"><path d="M16 14.200l6.500-1v6.300h-6.500zM23.500 13l8.500-1.200v7.700h-8.500zM16 20.500h6.500v6.300l-6.500-1zM23.500 20.500h8.500v7.700l-8.500-1.200z" fill="#fff"/></svg>
  <svg class="tb" viewBox="0 0 48 40"><circle cx="26" cy="18" r="5.500" fill="none" stroke="#fff" stroke-width="1.300"/><path d="M22 22l-6 6" stroke="#fff" stroke-width="1.400"/></svg>
  <svg class="tb" viewBox="0 0 48 40"><path d="M16.500 11.500v3h10v-3M16.500 27.500v-3h10v3M16.500 16.500h10v6h-10zM30.500 11v4M30.500 20v8" fill="none" stroke="#fff" stroke-width="1.200"/><path d="M29 16h3v3h-3z" fill="#fff"/></svg>
  <svg class="tb" viewBox="-2 0 48 40"><path d="M35 21.500h-15.500c.5 5 7 7 10.500 3h4.500c-3 8-19 7-19-4.500 0-12 19-13 19.500 1.500zM19.500 18h10c-.5-4.500-9-5-10 0z" fill="#6cc6f4"/><path d="M19 27c-8 7-3-6 5-11 5-4 11-5 9-1" fill="none" stroke="#f4c020" stroke-width="2"/></svg>
  <svg class="tb" viewBox="0 0 48 40"><path d="M17 11h9l1 2h11v14h-21z" fill="#f8d878"/><path d="M18 12h6v1h-6z" fill="#fff"/><path d="M17 15h21v12h-21z" fill="#ffe694"/><path d="M21 28v-7h14v7h-4v-4h-6v4z" fill="#2fa8e0"/></svg>
  <span class="active"><svg><use href="#exata"/></svg></span>
  <div class="tray">
    <svg class="tc" viewBox="0 0 14 9"><path d="M1 7.500l6-6 6 6" fill="none" stroke="#fff" stroke-width="1.300"/></svg>
    <svg class="tn" viewBox="0 0 17 14"><path d="M5 1.500h11v8h-11v-4M10.500 9.500v3M5 12.500h9M.5.500h4v4h-4zM2.500 4.500v8h2" fill="none" stroke="#fff" stroke-width="1.100"/></svg>
    <svg class="ts" viewBox="0 0 17 15"><path d="M1 4.500h2l3-3.500v11l-3-3h-2z" fill="none" stroke="#fff"/><circle cx="11.500" cy="9.500" r="4.600" fill="#e02028"/><path d="M9.500 7.500l4 4M13.500 7.500l-4 4" stroke="#fff" stroke-width="1.200"/></svg>
    <div class="clock"><span>3:32 PM</span><span>6/26/2024</span></div>
    <svg class="no" viewBox="0 0 17 17"><path d="M.6 1.500h15.600v11h-5l-2.700 2.700-2.700-2.700h-5.200z" fill="none" stroke="#fff" stroke-width="1.200"/></svg>
    <i class="peek"></i>
  </div>
</footer>
<script src="script.js"></script>
</body>
</html>
```

FILE: styles.css
```css
* { box-sizing: border-box; }
body { margin: 0; width: 1920px; height: 1080px; overflow: hidden; background: #f7f3f7; color: #000; font: 11px/14px "Noto Sans", "Open Sans", sans-serif; letter-spacing: -0.33px; display: flex; flex-direction: column; }
svg { display: block; flex: none; }
i { font-style: normal; }
.defs { width: 0; height: 0; position: absolute; }

.titlebar { height: 23px; background: #fff; display: flex; align-items: center; padding: 0 0 1px 2px; }
.titlebar span { padding-top: 1px; }
.logo { width: 16px; height: 16px; margin-right: 5px; }
.winctl { width: 102px; height: 12px; margin: -2px 19px 0 auto; }
.menu { height: 20px; background: #fff; border-bottom: 2px solid #f1eff1; padding: 3px 0 0 7px; display: flex; }
.m1 { width: 32px; } .m2 { width: 34px; } .m3 { width: 38px; } .m4 { width: 41px; } .m5 { width: 62px; }

.bar { flex: none; display: flex; align-items: center; border-bottom: 1px solid #b8b4b8; box-shadow: inset 0 1px #fff; }
.bar section { display: flex; align-items: center; height: 100%; flex: none; border-right: 1px solid #b8b4b8; }
.bar section:last-child { border-right: 0; }
.grip { width: 2px; height: 27px; margin: 0 4px; flex: none; background: repeating-linear-gradient(#bdb9bd 0 2px, transparent 2px 5px); }
.vsep { width: 1px; height: 25px; background: #c8c4c8; flex: none; }
.modes { height: 33px; }
.mode { display: flex; align-items: center; height: 29px; padding-top: 2px; letter-spacing: -.2px; }
.mode.on { width: 84px; background: #c6dff7; border: 1px solid #94cbf7; padding-left: 4px; }
.pg { width: 20px; height: 16px; margin-right: 3px; }
.mode.an { width: 83px; padding-left: 4px; letter-spacing: -.4px; } .mode.pt { width: 108px; padding-left: 4px; letter-spacing: -.35px; } .mode.pt svg { margin-right: 1px; }
.search { margin: 0 2px 0 auto; width: 234px; height: 24px; border: 1px solid #7b7d94; background: #fff; padding: 2px 1px; }
.search svg { width: 19px; height: 18px; }

.tools { height: 34px; }
.ic { width: 31px; height: 26px; }
.g1 { width: 105px; } .g2 { width: 198px; } .g3 { width: 374px; } .g4 { width: 800px; }
.g1 .grip { margin-right: 2px; }
.g2 .grip, .g3 .grip, .g4 .grip { margin-left: 5px; }
.g2 .grip { margin-right: 3px; }
.g3 .grip { margin-right: 2px; }
.g3 label { width: 14px; padding-left: 1px; }
.spin { width: 95px; height: 21px; margin-right: 2px; border: 1px solid #7b7d7b; background: #fff; display: flex; align-items: center; padding-left: 3px; position: relative; letter-spacing: -.1px; }
.spin i { margin-left: auto; margin-right: 2px; width: 13px; height: 17px; border: 1px solid #adaaad; background: linear-gradient(#adaaad, #adaaad) 0 7px / 100% 1px no-repeat, #f0eef0; display: flex; flex-direction: column; justify-content: space-around; align-items: center; }
.spin i::before, .spin i::after { content: ""; border: 3px solid transparent; border-top-width: 0; border-bottom: 3px solid #000; }
.spin i::after { border-top: 3px solid #000; border-bottom-width: 0; }
.rule { width: 20px; height: 12px; margin-left: 3px; }
.g4 .grip { margin-right: 6px; }
.gridic { width: 24px; height: 24px; margin-right: 6px; }
.sel, .btn { height: 21px; border: 1px solid #adaaad; background: #e7e3e7; display: flex; align-items: center; padding-left: 3px; padding-top: 1px; flex: none; }
.sel svg { width: 10px; height: 6px; margin: 0 4px 0 auto; color: #444; }
.xy { width: 83px; margin-left: 2px; }
.rot { width: 18px; height: 18px; margin: 0 7px 0 6px; }
.btn { background: #cecbce; border-color: #c6c3c6; color: #848284; }
.sv { width: 88px; padding-left: 6px; letter-spacing: -.1px; }
.sv svg { width: 8px; height: 6px; margin: 0 4px 0 auto; }
.sq { width: 17px; height: 17px; margin: 0 19px 0 7px; }
.bb { width: 18px; height: 18px; margin-right: 5px; }
.none { width: 52px; }

.run { height: 35px; }
.r1 { width: 235px; } .r2 { width: 301px; }
.r1 .grip { margin-right: 3px; }
.r1 .vsep { margin-left: 1px; }
.rec { font: bold 7px "Liberation Sans", sans-serif; fill: #d01820; text-anchor: middle; letter-spacing: 0; }
.r2 .grip { margin-right: 9px; }
.rx { width: 18px; height: 15px; margin-right: 6px; }
.emu { width: 94px; height: 23px; padding-left: 7px; }
.emu b { color: #1683d8; font-size: 15px; margin-right: 7px; }
.rs { width: 17px; height: 18px; margin: 0 4px 3px 3px; }
.psi { width: 73px; height: 23px; justify-content: center; padding: 1px 0 0; }
.arr { width: 22px; height: 16px; margin: 0 9px 0 5px; }
.wr { width: 22px; height: 22px; }
.r2 .vsep { margin-left: 8px; }
.r3 .grip { margin-right: 2px; margin-left: 5px; }
.hil { color: #848284; width: 97px; padding-top: 1px; }
.combo { width: 350px; height: 21px; border: 1px solid #cecbce; background: #f7f3f7; box-shadow: inset 0 0 0 1px #fff; display: flex; align-items: center; }
.combo svg { width: 10px; height: 6px; margin: 0 3px 0 auto; color: #aaa; }
.go { width: 24px; height: 24px; background: #d6d3d6; margin: 0 7px 0 3px; padding: 1px; }
.hg { width: 21px; height: 23px; margin-right: 10px; } .sc { width: 24px; height: 20px; }

.body { height: 895px; flex: none; display: flex; }
.vtabs { width: 26px; flex: none; font-weight: bold; font-size: 11px; letter-spacing: 0; }
.vtabs div { writing-mode: vertical-rl; transform: rotate(180deg); width: 25px; background: #dedbde; border: solid #a5a2a5; border-width: 0 1px 1px 0; display: flex; align-items: center; justify-content: center; }
.vtabs .on { background: #f7f3f7; border-right-color: #f7f3f7; }
.v1 { height: 83px; } .v2 { height: 60px; } .v3 { height: 139px; } .v4 { height: 116px; }

.toolset { width: 180px; flex: none; padding: 5px 0 0 4px; }
.scen { width: 175px; height: 22px; border: 1px solid #adaaad; background: #e7e3e7; display: flex; align-items: center; justify-content: center; gap: 1px; padding-top: 2px; letter-spacing: -.4px; }
.scen svg { width: 15px; height: 15px; margin-top: -2px; }
.scroller { display: flex; margin-top: 6px; height: 815px; }
.groups { width: 172px; padding: 5px 0 0 2px; flex: none; }
h3 { margin: 0 0 6px; height: 14px; font: inherit; padding-left: 20px; line-height: 16px; background: linear-gradient(#fff, #fff) 3px 6px / 8px 2px no-repeat, linear-gradient(#9c9a9c, #9c9a9c) 0 0 / 14px 14px no-repeat; }
.cells { display: grid; grid-template-columns: repeat(4, 38px); gap: 2px; margin-bottom: 14px; }
.cells > * { width: 38px; height: 38px; border: 1px solid #adaaad; background: #e7e3e7; }
.cells text { font: bold 12.5px "Liberation Sans", sans-serif; text-anchor: middle; letter-spacing: 0; paint-order: stroke; stroke: #e4e4e8; stroke-width: 1.5px; filter: drop-shadow(1px 1px 0 #777); fill: currentColor; }
.cells text.n { font-size: 12px; }
.blue { color: #215496; --line: #5580b8; } .green { color: #0a7838; --line: #3ca468; } .gray { color: #999; --line: #999; }
.cells text.ap { font: 8.5px "Noto Sans", sans-serif; fill: #5a86e0; stroke: none; filter: none; }
.cells text.red { font: 9px "Noto Sans", sans-serif; fill: #c83040; stroke: none; filter: none; }
.cells text.red.s { font-size: 6.5px; }
.cells text.fiveg { font: 13px "Open Sans", sans-serif; fill: #333; stroke: none; filter: none; }
.apps span { display: flex; align-items: center; justify-content: center; text-align: center; color: #0038c8; font-size: 9px; line-height: 10px; font-weight: 500; letter-spacing: 0; padding-top: 2px; }
.apps .thin { color: #3058cc; font-size: 10px; padding-top: 0; letter-spacing: .2px; } .apps .up { padding-bottom: 2px; } .apps .big { font-size: 11px; padding-top: 0; letter-spacing: .5px; }
.apps .on { background: #cee7f7; border-color: #005594; padding-top: 3px; }
.sbar { width: 4px; background: repeating-conic-gradient(#d4d1d4 0 25%, #f7f3f7 0 50%) 0 0 / 2px 2px; display: flex; flex-direction: column; justify-content: space-between; }
.sbar i { height: 507px; background: #d2cfd2; } .sbar b { height: 4px; background: #d2cfd2; }
.pick { display: flex; align-items: center; margin-top: 5px; height: 20px; font-size: 12px; }
.pick b { width: 56px; letter-spacing: -.2px; padding-top: 2px; margin-left: -1px; }
.std { width: 120px; height: 20px; font-size: 11px; margin-left: 1px; padding-top: 2px; }

.work { flex: 1; padding-left: 11px; display: flex; flex-direction: column; min-width: 0; }
.doctabs { display: flex; justify-content: space-between; height: 27px; padding-top: 2px; flex: none; position: relative; z-index: 1; }
.doctabs span { width: 76px; height: 25px; border: 1px solid #c6c3c6; border-bottom: 0; background: #fff; padding: 5px 0 0 9px; letter-spacing: -.15px; }
.doctabs svg { width: 14px; height: 14px; margin: 9px 5px 0 0; }
.frame { width: 1701px; height: 550px; margin-top: -1px; flex: none; border: 1px solid #c6c3c6; background: #fff; display: grid; grid-template: 20px 527px / 21px 1677px; }
.rtop { grid-column: 1 / 3; width: 1698px; height: 20px; }
.rleft { width: 21px; height: 527px; }
.frame text { font: 11px "Noto Sans", sans-serif; fill: #848284; letter-spacing: -.4px; }
.view { background: #c6c3c6; position: relative; box-shadow: inset 0 1px #bab6ba; }
.scene { width: 1677px; height: 527px; }
.frame text.id { font: 14px "Liberation Sans", sans-serif; fill: #000; letter-spacing: 0; }
.frame text.cbr { font: 15px "Liberation Sans", sans-serif; fill: #068006; letter-spacing: 0; }
.zoomers { position: absolute; right: 10px; top: 11px; display: grid; gap: 5px; }
.zoomers svg { width: 23px; height: 23px; background: #696b73; outline: 1px solid #fff; outline-offset: -1px; }

.tabs { display: flex; align-items: flex-end; height: 21px; margin: 13px 0 0 4px; flex: none; position: relative; z-index: 1; }
.tabs span { height: 19px; border: 1px solid #dedbde; border-right: 0; display: flex; align-items: center; padding-left: 8px; }
.tabs .on { height: 21px; background: #fff; border-bottom: 0; padding-bottom: 2px; }
.tabs .t1 { width: 51px; } .tabs .t2 { width: 58px; padding-left: 10px; } .tabs .t3 { width: 74px; padding-left: 11px; letter-spacing: -.2px; } .tabs .t4 { width: 68px; padding-left: 10px; } .tabs .t5 { width: 84px; padding-left: 12px; letter-spacing: -.4px; } .tabs .t6 { width: 75px; } .tabs .t7 { width: 64px; padding-left: 10px; border-right: 1px solid #dedbde; }
.pane { width: 1696px; height: 238px; margin: -1px 0 0 2px; border: 1px solid #dedbde; box-shadow: inset 0 0 0 2px #fcfafc; padding: 6px; flex: none; }
.table { width: 1681px; height: 222px; border: 1px solid #7b7d8c; background: #fff; margin-top: 1px; }
.tr { display: grid; grid-template-columns: 338px 338px 338px 338px 1fr; height: 30px; align-items: center; }
.tr span { padding-left: 12px; }
.th { height: 28px; background: #f7f3f7; border-bottom: 1px solid #adaaad; box-shadow: inset 0 1px #adaaad; }
.tr.th span { border-right: 1px solid #adaaad; height: 27px; padding: 5px 0 0 10px; }
.tr.th span:last-child { border: 0; }
.btabs { display: flex; margin: 5px 0 0 -2px; height: 25px; flex: none; font-weight: bold; }
.btabs span { border: solid #a5a2a5; border-width: 1px 0 0 1px; background: #dedbde; padding: 5px 0 0 8px; font-family: "Open Sans", sans-serif; letter-spacing: 0; white-space: nowrap; }
.btabs .on { background: #f7f3f7; }
.b1 { width: 78px; } .b2 { width: 104px; } .b3 { width: 69px; } .b4 { width: 109px; } .b5 { width: 124px; }
.status { text-align: right; padding: 3px 2px 0 0; }

.taskbar { height: 40px; flex: none; background: #000; display: flex; color: #fff; }
.tb { width: 48px; height: 40px; }
.active { width: 48px; margin-left: 5px; background: #323538; border-bottom: 2px solid #76b9ed; padding: 8px 0 0 12px; }
.active svg { width: 24px; height: 24px; }
.tray { margin-left: auto; display: flex; align-items: center; }
.tc { width: 14px; height: 9px; margin-right: 8px; } .tn { width: 17px; height: 14px; margin-right: 7px; } .ts { width: 17px; height: 15px; margin-right: 2px; }
.clock { width: 64px; display: flex; flex-direction: column; align-items: center; font-size: 12px; line-height: 18px; letter-spacing: -.45px; margin: -2px 14px 0 0; }
.no { width: 17px; height: 17px; margin-right: 19px; }
.peek { width: 1px; height: 40px; background: #666; margin-right: 4px; }
```

FILE: script.js
```js
// Rulers and grid, one step per 100 scenario metres.
const NS = "http://www.w3.org/2000/svg";
const STEP = 33.07;
const RED = "#f00", GRAY = "#848284";
// Row positions inside the viewport, from 0 m (bottom) to 1500 m (top).
const ROWS = [512, 479, 445, 412, 379, 346, 313, 280, 247, 214, 181, 148, 115, 82, 48, 15];

function line(parent, x1, y1, x2, y2, color) {
  const l = document.createElementNS(NS, "path");
  l.setAttribute("d", `M${x1} ${y1}L${x2} ${y2}`);
  l.setAttribute("stroke", color);
  parent.appendChild(l);
}
function label(parent, x, y, text, rotate) {
  const t = document.createElementNS(NS, "text");
  t.setAttribute("x", x);
  t.setAttribute("y", y);
  if (rotate) t.setAttribute("transform", `rotate(90 ${x} ${y})`);
  t.textContent = text;
  parent.appendChild(t);
}

const rtop = document.getElementById("rtop");
for (let i = -17; i <= 32; i++) {
  const x = Math.floor(611.4 + i * STEP) + 0.5;
  const edge = i === 0 || i === 15;
  line(rtop, x, edge || i % 10 === 0 ? 2 : i % 5 === 0 ? 12 : 17, x, 20, edge ? RED : GRAY);
  if (i % 5 === 0) label(rtop, x + 3.5, 13, i * 100);
}

const rleft = document.getElementById("rleft");
ROWS.forEach((row, i) => {
  const y = row + 0.5;
  const edge = i === 0 || i === 15;
  line(rleft, edge || i % 10 === 0 ? 2 : i % 5 === 0 ? 12 : 18, y, edge ? 20 : 21, y, edge ? RED : GRAY);
  if (i % 5 === 0) label(rleft, 4, y + 4, i * 100, true);
});

const grid = document.getElementById("grid");
for (const major of [false, true]) {
  for (let i = 1; i < 15; i++) {
    if ((i === 10) !== major) continue;
    const color = major ? "#949294" : "#d0d0d0";
    const x = Math.floor(590.4 + i * STEP) + 0.5;
    line(grid, x, 16, x, 512, color);
    line(grid, 591, ROWS[i] + 0.5, 1086, ROWS[i] + 0.5, color);
  }
}
```
